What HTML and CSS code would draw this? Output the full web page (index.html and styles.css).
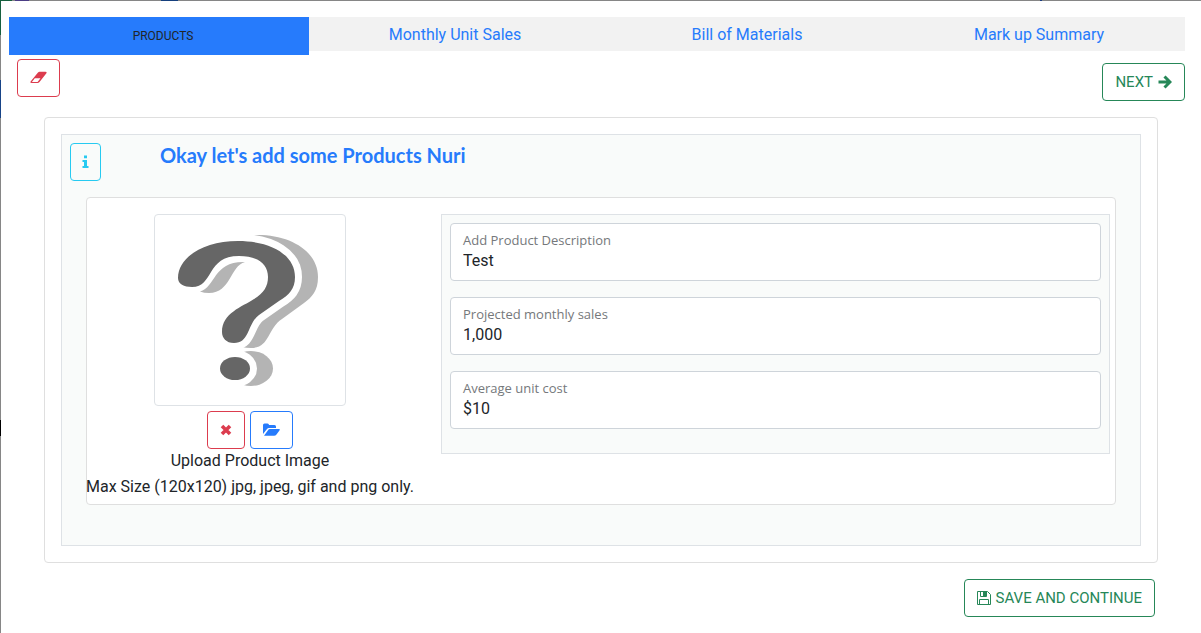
FILE: index.html
```html
<!DOCTYPE html>
<html lang="en">
<head>
<meta charset="utf-8">
<title>Products</title>
<link rel="stylesheet" href="styles.css">
</head>
<body>
<main class="modal">
  <nav class="tabs">
    <a class="tab tab-active" href="#products">PRODUCTS</a>
    <a class="tab" href="#sales">Monthly Unit Sales</a>
    <a class="tab" href="#materials">Bill of Materials</a>
    <a class="tab" href="#summary">Mark up Summary</a>
  </nav>
  <div class="toolbar">
    <button class="btn red" type="button" aria-label="Clear">
      <svg width="17" height="14" viewBox="0 0 17 14"><path fill="currentColor" fill-rule="evenodd" d="M8 1.600Q8.700.7 9.500.7H15.500Q17.200.7 16.400 2.200L9.500 11Q8.700 12 7.500 12H1.500Q-.2 12 .6 10.500ZM4.800 7.300 1.900 10.900H7.600L10.500 7.300Z"/></svg>
    </button>
    <button class="btn green next" type="button">NEXT
      <svg width="14" height="14" viewBox="0 0 14 14"><path d="M0.500 7H12M6.500 1.500 12 7 6.500 12.500" fill="none" stroke="currentColor" stroke-width="3"/></svg>
    </button>
  </div>
  <section class="card">
    <div class="panel">
      <header class="heading">
        <button class="btn cyan" type="button" aria-label="Information">
          <svg width="7" height="14" viewBox="0 0 7 14"><path fill="currentColor" d="M2 .5H5V3.200H2ZM.5 5H5V11H6.500V13H.5V11H2V7H.5Z"/></svg>
        </button>
        <h1 class="title">Okay let's add some Products Nuri</h1>
      </header>
      <div class="product">
        <div class="upload">
          <div class="picture">
            <svg class="question" viewBox="0 0 190 190" role="img" aria-label="No image">
              <g fill="#b4b4b4">
                <path d="M93 20.500C132 17 163 35 163 62C163 76 157 82 149 88L127 104C112 114 115 133 96 133Q91 133 87 132L103 105 137 78 145 50 121 31Z"/>
                <ellipse cx="96" cy="153.500" rx="22" ry="17.500"/>
              </g>
              <g fill="#666" stroke="#fff" stroke-width="14" paint-order="stroke">
                <path d="M23 63C23 42 49 26 83 26C118 26 140 41 140 62C140 74 134 80 124 86L104 100C92 109 95 128 79 128C71 128 67 123 67 117C67 98 87 92 99 84C109 78 113 71 113 62C113 49 103 41 84 41C51 41 59 72 37 72C29 72 23 69 23 63Z"/>
                <ellipse cx="80" cy="153.500" rx="15" ry="11.500"/>
              </g>
              <path fill="#b4b4b4" d="M45 76.500C61 72 58 46 90 47C75 51 76 78 54 78Q49 78 45 76.500Z"/>
            </svg>
          </div>
          <div class="actions">
            <button class="btn red" type="button" aria-label="Remove image">
              <svg width="12" height="14" viewBox="0 0 12 14"><path d="M2 3 10 11M10 3 2 11" stroke="currentColor" stroke-width="3.600"/></svg>
            </button>
            <button class="btn blue" type="button" aria-label="Choose image">
              <svg width="17" height="14" viewBox="0 0 17 14"><path fill="currentColor" d="M0 11V2Q0 .5 1.500.500H4.500Q6 .5 6 2H11.500Q13 2 13 3.500V5H6Q4.800 5 3.800 6.200ZM1 12.800 5 7.200Q5.600 6 7 6H16.200Q17.300 6 16.600 7.200L13.500 11.500Q12.600 12.800 11 12.800Z"/></svg>
            </button>
          </div>
          <p class="caption">Upload Product Image</p>
          <p class="caption">Max Size (120x120) jpg, jpeg, gif and png only.</p>
        </div>
        <form class="fields">
          <div class="field"><label for="description">Add Product Description</label><input id="description" type="text" value="Test"></div>
          <div class="field"><label for="units">Projected monthly sales</label><input id="units" type="text" value="1,000"></div>
          <div class="field"><label for="cost">Average unit cost</label><input id="cost" type="text" value="$10"></div>
        </form>
      </div>
    </div>
  </section>
  <footer class="footer">
    <button class="btn green" type="button">
      <svg width="14" height="14" viewBox="0 0 14 14"><path fill="none" stroke="currentColor" d="M.5.500H10.500L13.500 3.500V13.500H.5ZM3.500.500V5.500H9.500V.5M2.500 13.500V8.500H11.500V13.500"/><path fill="currentColor" d="M6 1H9V5H6Z"/></svg>
      SAVE AND CONTINUE</button>
  </footer>
</main>
</body>
</html>
```
FILE: styles.css
```css
* { box-sizing: border-box; }
body {
  margin: 0;
  min-height: 100vh;
  padding: 1px 0 0 1px;
  color: #212529;
  font: 16px/24px "Trebuchet MS", Roboto, sans-serif;
  background:
    linear-gradient(to right, #17603f 12px, #868686 12px 15px, #4b3d85 15px 29px, #868686 29px 161px, #153f7d 161px 178px, #868686 178px 1040px, #1b3d80 1040px 1042px, #868686 1042px) top / 100% 1px no-repeat,
    linear-gradient(#17603f 35px, #868686 35px 80px, #174387 80px 118px, #868686 118px 420px, #000 420px 436px, #868686 436px);
}
.modal { min-height: calc(100vh - 1px); padding: 16px 16px 16px 8px; background: #fff; }
.tabs { display: flex; align-items: flex-start; }
.tab { flex: 1 1 0; height: 34px; line-height: 36px; text-align: center; color: #267bfc; background: #f2f2f2; text-decoration: none; }
.tab-active { flex-basis: 8px; height: 38px; padding-left: 8px; line-height: 38px; font-size: 12px; color: #212529; background: #267bfc; }
.toolbar { display: flex; justify-content: space-between; align-items: flex-start; padding: 4px 0 0 8px; }
.next { margin-top: 4px; }
.btn { display: inline-flex; align-items: center; gap: 5px; height: 38px; padding: 0 12px; border: 1px solid; border-radius: 4px; background: transparent; font: inherit; font-size: 15px; }
.btn svg { flex: none; }
.red { color: #dc3c4e; }
.green { color: #268758; }
.cyan { padding: 0 11px; color: #27caf1; }
.blue { color: #267bfc; }
.card { margin: 16px 27px 0 35px; padding: 16px; border: 1px solid #dfdfdf; border-radius: 4px; }
.panel { padding: 8px 24px 40px 8px; border: 1px solid #dee2e6; background: #f9fbfa; }
.heading { display: flex; align-items: flex-start; gap: 59px; }
.title { margin: 0; font: bold 20px/24px Lato, sans-serif; color: #267bfc; }
.product { display: grid; grid-template-columns: minmax(0, 326fr) minmax(0, 669fr); gap: 28px; align-items: start; margin: 16px 0 0 16px; padding: 16px 5px 5px 0; border: 1px solid #dfdfdf; border-radius: 4px; background: #fff; }
.upload { display: flex; flex-direction: column; align-items: center; }
.picture { width: 192px; border: 1px solid #dee2e6; border-radius: 4px; }
.question { display: block; width: 100%; }
.actions { display: flex; gap: 5px; margin: 5px 0 -1px; }
.caption { margin: 0; line-height: 26px; white-space: nowrap; }
.product { padding-bottom: 4px; }
.fields { display: flex; flex-direction: column; gap: 16px; padding: 8px 8px 24px; border: 1px solid #dee2e6; background: #f9fbfa; }
.field { display: flex; flex-direction: column; height: 58px; padding: 6px 12px; border: 1px solid #ced4da; border-radius: 4px; background: #fff; }
.field label { font: 13px/20px "Trebuchet MS", "Open Sans", sans-serif; color: #75787b; }
.field input { width: 100%; height: 22px; padding: 0; border: 0; outline: 0; font: inherit; color: inherit; background: transparent; }
.footer { display: flex; justify-content: flex-end; margin: 16px 30px 0 0; }
```
